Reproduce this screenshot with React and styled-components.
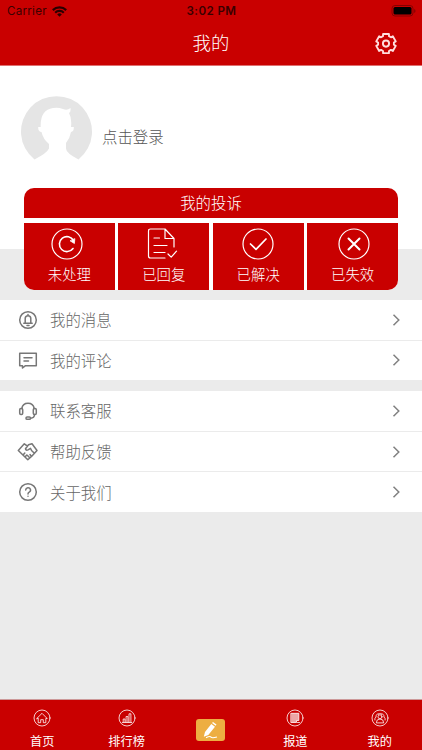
import React from 'react';
import styled, { createGlobalStyle } from 'styled-components';

const RED = '#c90000';

const GlobalStyle = createGlobalStyle`
  * {
    box-sizing: border-box;
  }
  body {
    margin: 0;
    overflow: hidden;
    background: #ebebeb;
    font-family: "Noto Sans CJK SC", sans-serif;
    font-weight: 300;
  }
`;

const Screen = styled.div`
  display: flex;
  flex-direction: column;
  width: 422px;
  height: 750px;
  background: #ebebeb;
`;

const Header = styled.header`
  height: 66px;
  background: ${RED};
  border-bottom: 1px solid #df7070;
`;

const StatusBar = styled.div`
  display: grid;
  grid-template-columns: 1fr auto 1fr;
  align-items: center;
  height: 22px;
  padding: 0 6px 0 7px;
  font-family: Inter, sans-serif;
  font-size: 11.6px;
  line-height: 22px;
  color: #3a0000;
`;

const Carrier = styled.span`
  display: flex;
  align-items: center;
  gap: 5px;
  font-weight: 400;
  letter-spacing: 0.25px;
`;

const Clock = styled.span`
  font-weight: 600;
  letter-spacing: 0.4px;
`;

const Battery = styled.svg`
  justify-self: end;
`;

const TitleBar = styled.div`
  display: grid;
  grid-template-columns: 1fr auto 1fr;
  align-items: center;
  height: 43px;
  padding: 0 24px;
`;

const Title = styled.h1`
  grid-column: 2;
  margin: 0;
  padding-bottom: 4px;
  font-size: 18.4px;
  font-weight: 300;
  line-height: 36px;
  color: #fff;
`;

const SettingsButton = styled.button`
  justify-self: end;
  display: flex;
  padding: 0;
  border: 0;
  background: none;
`;

const Profile = styled.section`
  display: flex;
  align-items: flex-start;
  height: 183px;
  padding: 30px 20px 0;
  background: #fff;
`;

const LoginText = styled.span`
  margin: 29px 0 0 9px;
  font-size: 15.4px;
  line-height: 22px;
  color: #555;
`;

const Card = styled.section`
  display: flex;
  flex-direction: column;
  gap: 5px;
  width: 374px;
  height: 102px;
  margin: -61px 0 10px 24px;
  border-radius: 10px;
  overflow: hidden;
  background: #fff;
  flex-shrink: 0;
`;

const CardTitle = styled.div`
  height: 30px;
  background: ${RED};
  font-size: 15.4px;
  line-height: 28px;
  text-align: center;
  color: #fff;
`;

const Tiles = styled.div`
  display: grid;
  grid-template-columns: repeat(4, 1fr);
  gap: 3.6px;
  flex: 1;
`;

const Tile = styled.div`
  display: flex;
  flex-direction: column;
  align-items: center;
  padding-top: 5px;
  background: ${RED};
  font-size: 14.4px;
  line-height: 20px;
  color: #fff;

  svg {
    flex-shrink: 0;
    margin-bottom: 4px;
    margin-left: ${(p) => p.$shift}px;
  }
`;

const Menu = styled.nav`
  margin-bottom: 11px;
  background: #fff;
`;

const MenuRow = styled.div`
  display: flex;
  align-items: center;
  height: ${(p) => (p.$last ? 39.6 : 40.6)}px;
  padding: 0 20px 0 17px;
  border-bottom: ${(p) => (p.$last ? 0 : 1)}px solid #ebebeb;
  font-size: 15.4px;
  color: #666;
`;

const MenuLabel = styled.span`
  flex: 1;
  margin-left: 11px;
  padding-bottom: 1px;
  line-height: 38px;
`;

const TabBar = styled.footer`
  display: grid;
  grid-template-columns: repeat(5, 84.4px);
  height: 51px;
  margin-top: auto;
  border-top: 1px solid #c99;
  background: ${RED};
`;

const Tab = styled.div`
  display: flex;
  flex-direction: column;
  align-items: center;
  padding-top: ${(p) => (p.$main ? 19 : 9)}px;
  font-size: 12.2px;
  font-weight: 400;
  line-height: 18px;
  color: #fff;

  svg {
    flex-shrink: 0;
    margin-bottom: 5px;
  }
`;

const PenBadge = styled.span`
  display: flex;
  width: 29px;
  height: 22px;
  border-radius: 3px;
  background: #edae42;
`;

const Icon = ({ size, box = 24, stroke = 1.5, color = 'currentColor', children }) => (
    <svg
        width={size}
        height={size}
        viewBox={`0 0 ${box} ${box}`}
        fill="none"
        stroke={color}
        strokeWidth={stroke}
        strokeLinecap="round"
        strokeLinejoin="round"
    >
        {children}
    </svg>
);

const WifiIcon = () => (
    <svg width="15" height="11" viewBox="0 0 15 11" fill="none" stroke="#2a0000" strokeWidth="2.2">
        <path d="M.8 4.1a9.5 9.5 0 0 1 13.4 0M3.2 6.7a6.1 6.1 0 0 1 8.6 0" />
        <path d="M7.5 10.8 5.2 8.4a3.3 3.3 0 0 1 4.6 0z" fill="#2a0000" stroke="none" />
    </svg>
);

const BatteryIcon = () => (
    <Battery width="25" height="12" viewBox="0 0 25 12">
        <rect x="1" y=".5" width="21" height="10.500" rx="3" fill="none" stroke="#860000" />
        <rect x="2.500" y="2" width="18" height="7.500" rx="1.5" fill="#000" />
        <path d="M23.2 4v4q1.3-.5 1.3-2t-1.3-2" fill="#860000" />
    </Battery>
);

// six teeth: each one is base, top, top, base in polar coordinates
const gearPoints = [0, 60, 120, 180, 240, 300].flatMap((tooth) =>
    [[-22, 8], [-17, 10], [17, 10], [22, 8]].map(([offset, r]) => {
        const a = ((tooth + offset - 90) * Math.PI) / 180;
        return `${(12 + r * Math.cos(a)).toFixed(2)},${(12 + r * Math.sin(a)).toFixed(2)}`;
    })
).join(' ');

const GearIcon = () => (
    <svg width="24" height="24" viewBox="0 0.4 24 24" fill="none" stroke="#ffdede" strokeWidth="1.9" strokeLinejoin="round">
        <polygon points={gearPoints} />
        <circle cx="12" cy="12" r="3.1" />
    </svg>
);

const Avatar = () => (
    <svg width="73" height="73" viewBox="0 0 73 73">
        <path
            d="M14.500 63.500A35.500 35.500 0 1 1 58.500 63.500Q46 57 46 52.500V47Q50 42 51 36 54 36 53.800 31H51Q52 22 49 17 51 16 50.500 12 47 15 43 13 38 11 33 12 20 14 20.700 31H18.200Q18 36 21.500 36 23 43 29 48V52.500Q27 57 14.500 63.500"
            fill="#e5e5e5"
        />
    </svg>
);

const tiles = [
    {
        label: '未处理',
        shift: -4,
        icon: (
            <>
                <circle cx="16" cy="16" r="15" />
                <path d="M22.500 12.500A7.500 7.500 0 1 0 22 20.500" strokeWidth="1.6" />
                <path d="m23.800 11-.4 4.500-4-2.500z" fill="currentColor" strokeWidth=".8" />
            </>
        ),
    },
    {
        label: '已回复',
        shift: -3,
        icon: (
            <>
                <path d="M28 19v-8.500L19 1H4.500Q2.500 1 2.500 3v25q0 2 2 2H19M19 1v9.500h9M8 10h5.500M8 17.500h13M8 24.500h11" />
                <path d="m22 26 3.200 3.200 5.300-6" />
            </>
        ),
    },
    {
        label: '已解决',
        shift: 0,
        icon: (
            <>
                <circle cx="16" cy="16" r="15" />
                <path d="m8.500 16 5.500 5.300 10-10.300" strokeWidth="1.7" />
            </>
        ),
    },
    {
        label: '已失效',
        shift: 3,
        icon: (
            <>
                <circle cx="16" cy="16" r="15" />
                <path d="m10.500 10.500 11 11m0-11-11 11" strokeWidth="2" />
            </>
        ),
    },
];

const messageMenu = [
    {
        label: '我的消息',
        icon: (
            <>
                <circle cx="11" cy="11" r="8.300" />
                <path d="M6.800 14.300h8.400M8.200 14V9.500a2.800 2.800 0 0 1 5.600 0V14M11 5.500v1M10 16.500h2" />
            </>
        ),
    },
    {
        label: '我的评论',
        icon: <path d="M2.700 4.200h16.600v12.600H8.200L5.500 19v-2.200H2.700zM7 8.800h8M7 12h4.500" />,
    },
];

const helpMenu = [
    {
        label: '联系客服',
        icon: (
            <>
                <path d="M4.800 8.500a6.300 6.300 0 0 1 12.400 0M17.500 14.500q0 3.500-4 3.700" />
                <rect x="2.700" y="8.500" width="3" height="6" rx="1.200" />
                <rect x="16.300" y="8.500" width="3" height="6" rx="1.200" />
                <rect x="9" y="17" width="4.500" height="2.300" rx="1.100" />
            </>
        ),
    },
    {
        label: '帮助反馈',
        icon: (
            <path d="M10.500 5.200 7.300 2.800 1.300 9.500l9.500 9.300 3.700-3.300 5.500-6-5-6.700-3.500 1-3 4q.5 2 2.500 1l2.500-1.500q.5 2.200 3.500 4.500M13 13.500l1.500 2M10.500 14.500l2.200 2.200M8.200 15.800 9.800 14M6.300 13.800 7.800 12" />
        ),
    },
    {
        label: '关于我们',
        icon: (
            <>
                <circle cx="11" cy="11" r="8.300" />
                <path d="M8.700 9a2.400 2.400 0 1 1 3.500 2.200q-1.200.6-1.200 1.800M11 15.200v.1" />
            </>
        ),
    },
];

const tabIcons = {
    home: <path d="M3.800 9.500 9 4.300l5.200 5.200h-1.400v4.200h-2.500v-3H7.700v3H5.200V9.500z" />,
    rank: <path d="M4.300 13.500h9.400M5.200 13v-3h1.800v3M8.100 13V7.500h1.800V13M11 13V4.800h1.900V13" />,
    report: (
        <>
            <path d="M5.200 4.300h7.600v7.200h-2.300v2H5.200z" fill="currentColor" fillOpacity=".65" />
            <path d="M11.500 13.500h2" />
        </>
    ),
    mine: (
        <>
            <circle cx="9" cy="7.800" r="2" />
            <path d="M5.300 13.500q0-3.500 3.700-3.500t3.700 3.500zM7.500 5q-2.500-.5-2.500 3Q3.500 9.200 3.800 11M10.500 5Q13 4.500 13 8q1.500 1.200 1.200 3M7.500 5q1.500-1 3 0" />
        </>
    ),
};

const PenIcon = () => (
    <svg width="29" height="22" viewBox="0 0 29 22" fill="none" stroke="#fff">
        <path d="m7.800 17.800 1.200-4.800L15.300 5l3.700 2.700-6.700 8.300zM16 4l1-1 3.500 2.500-.8 1.200z" fill="#fff" stroke="none" />
        <path d="M10 18.800q4-2 5-.7t6-.1" strokeWidth="1.100" />
    </svg>
);

const tabs = [
    { label: '首页', icon: 'home' },
    { label: '排行榜', icon: 'rank' },
    { main: true },
    { label: '报道', icon: 'report' },
    { label: '我的', icon: 'mine' },
];

const MenuGroup = ({ items }) => (
    <Menu>
        {items.map((item, i) => (
            <MenuRow key={item.label} $last={i === items.length - 1}>
                <Icon size={22} box={22} stroke={1.5} color="#777">{item.icon}</Icon>
                <MenuLabel>{item.label}</MenuLabel>
                <svg width="12" height="14" viewBox="0 0 12 14" fill="none" stroke="#808080" strokeWidth="1.500">
                    <path d="m3.500 1.700 5.300 5.300-5.300 5.300" />
                </svg>
            </MenuRow>
        ))}
    </Menu>
);

export default function App() {
    return (
        <Screen>
            <GlobalStyle />
            <Header>
                <StatusBar>
                    <Carrier>Carrier <WifiIcon /></Carrier>
                    <Clock>3:02 PM</Clock>
                    <BatteryIcon />
                </StatusBar>
                <TitleBar>
                    <Title>我的</Title>
                    <SettingsButton aria-label="设置"><GearIcon /></SettingsButton>
                </TitleBar>
            </Header>

            <Profile>
                <Avatar />
                <LoginText>点击登录</LoginText>
            </Profile>

            <Card>
                <CardTitle>我的投诉</CardTitle>
                <Tiles>
                    {tiles.map((tile) => (
                        <Tile key={tile.label} $shift={tile.shift}>
                            <Icon size={32} box={32} stroke={1.2}>{tile.icon}</Icon>
                            {tile.label}
                        </Tile>
                    ))}
                </Tiles>
            </Card>

            <MenuGroup items={messageMenu} />
            <MenuGroup items={helpMenu} />

            <TabBar>
                {tabs.map((tab, i) => (
                    <Tab key={i} $main={tab.main}>
                        {tab.main ? (
                            <PenBadge><PenIcon /></PenBadge>
                        ) : (
                            <>
                                <Icon size={18} box={18} stroke={0.8}>
                                    <circle cx="9" cy="9" r="8" />
                                    {tabIcons[tab.icon]}
                                </Icon>
                                {tab.label}
                            </>
                        )}
                    </Tab>
                ))}
            </TabBar>
        </Screen>
    );
}
